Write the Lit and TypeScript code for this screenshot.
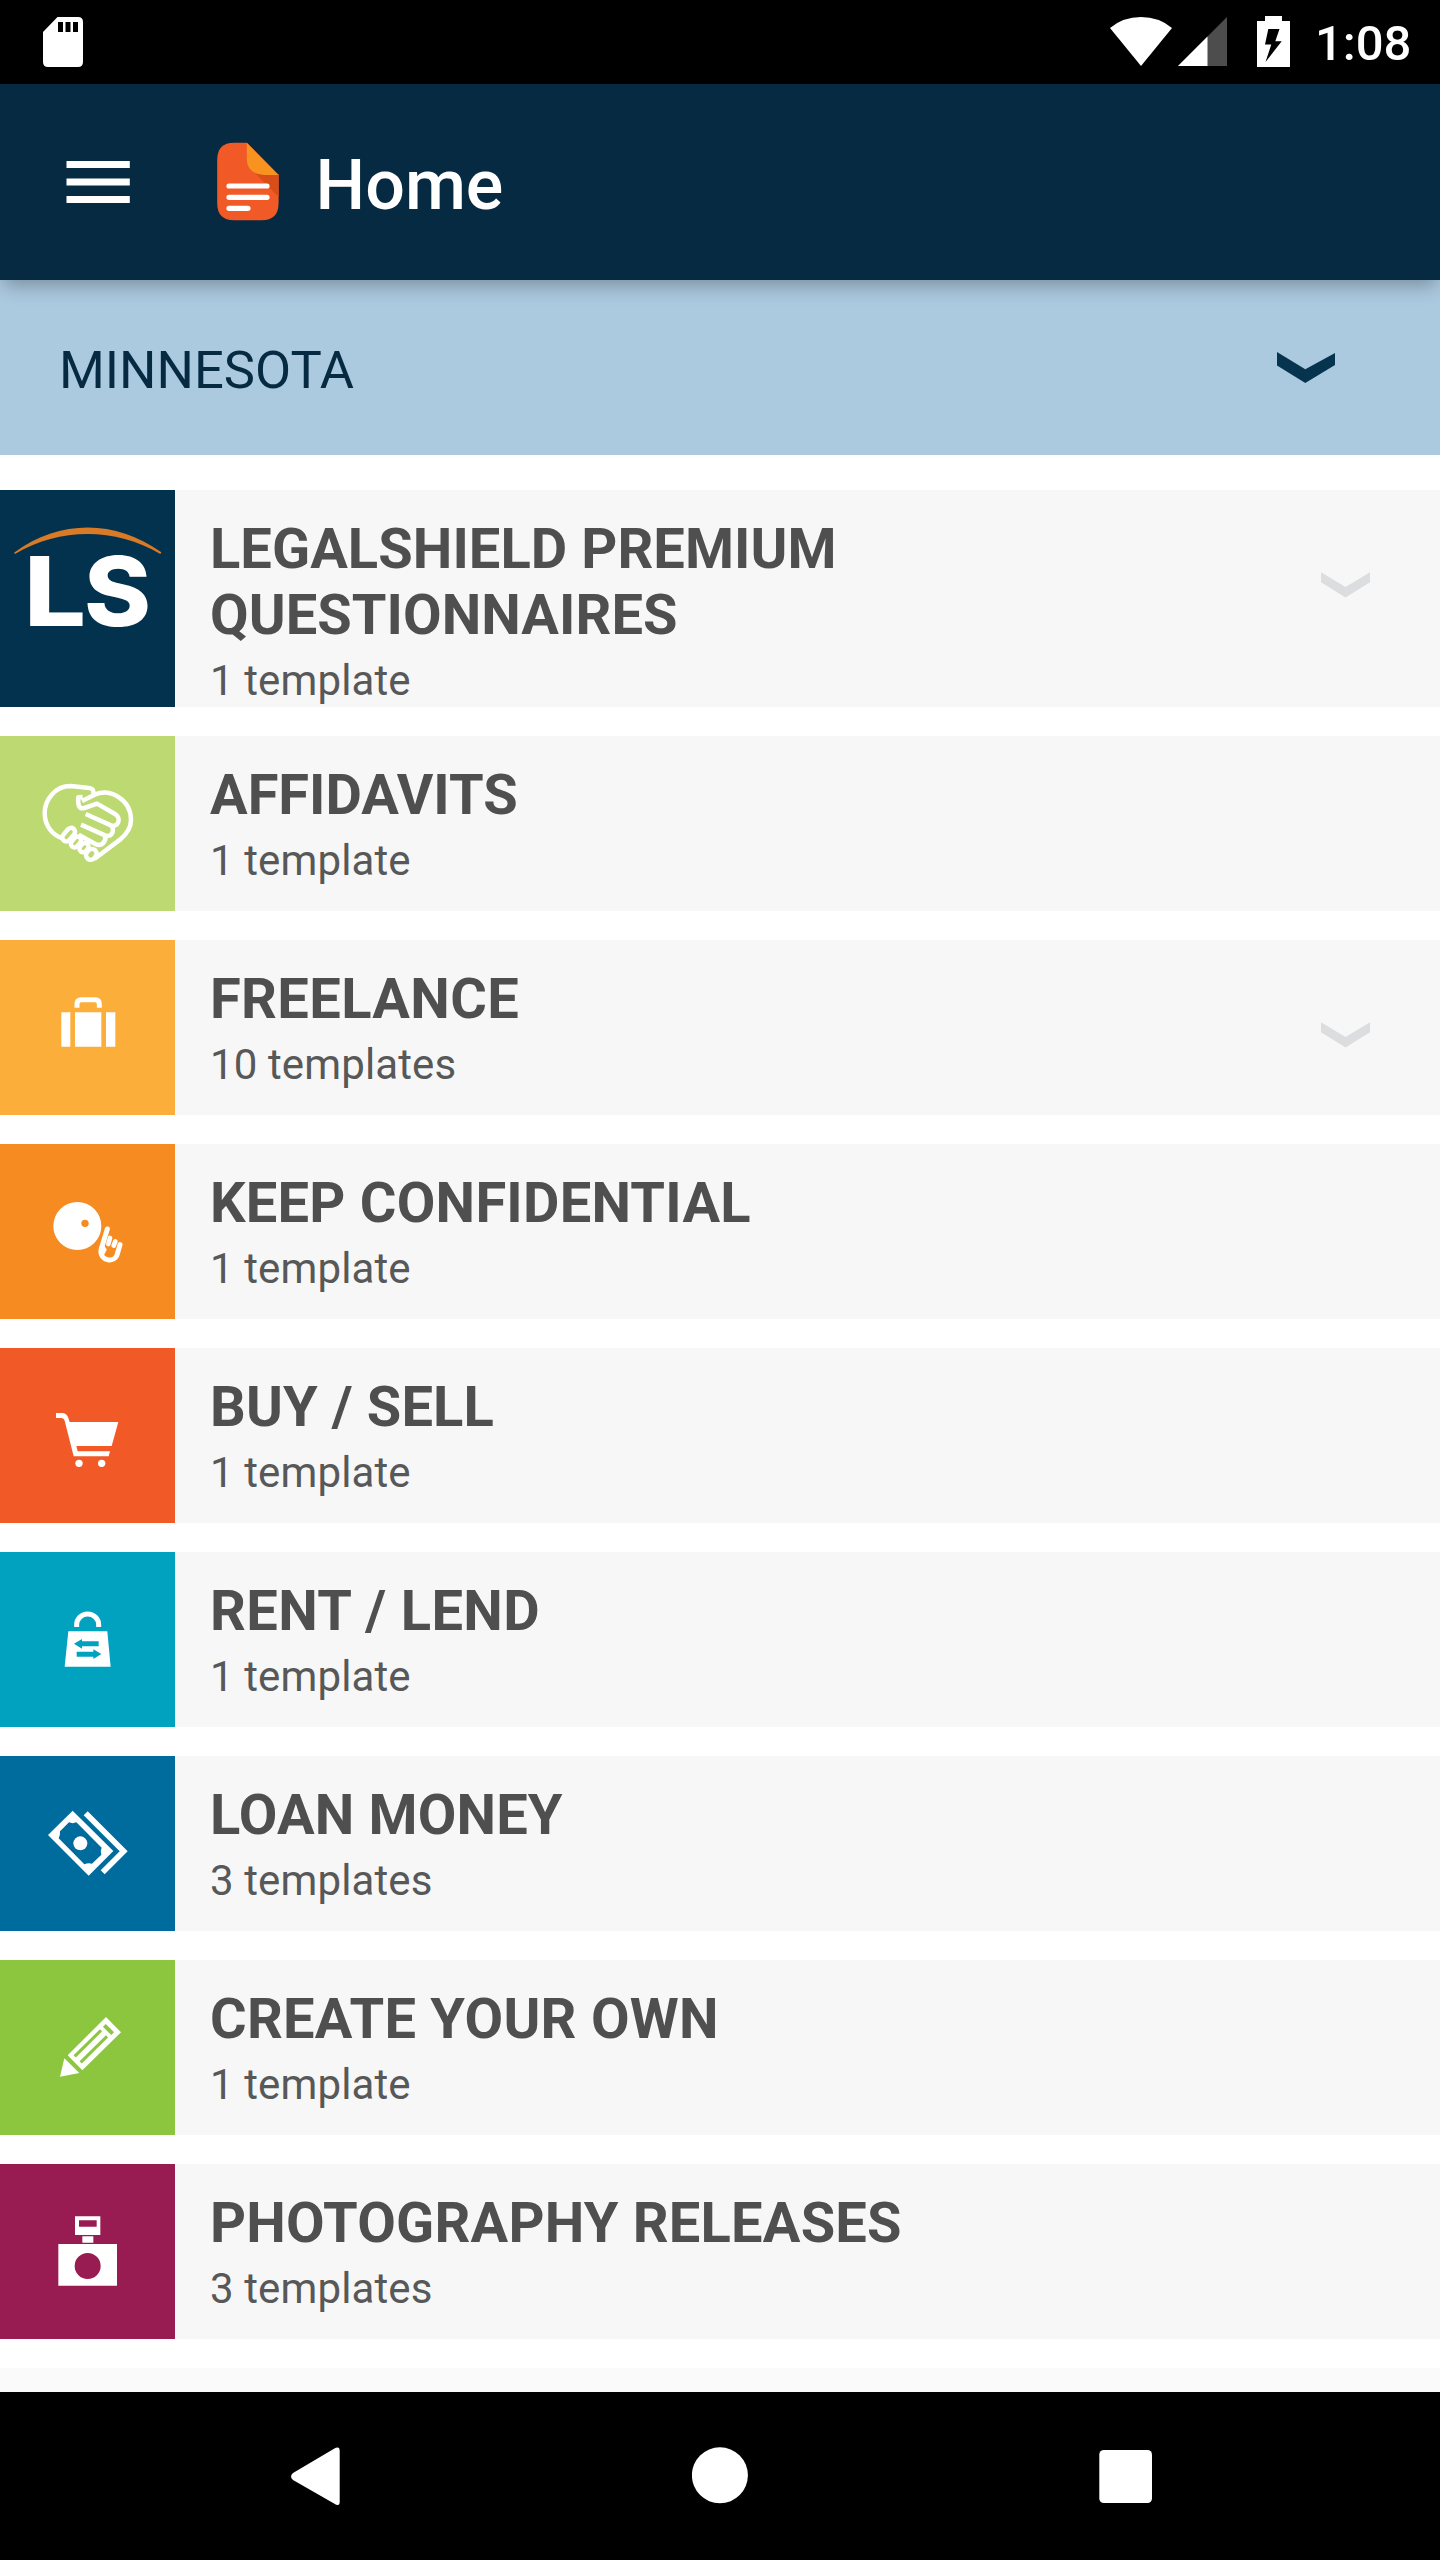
import { LitElement, html, css, svg, nothing, TemplateResult } from "lit";
import { customElement, property } from "lit/decorators.js";

interface Category {
  title: string;
  count: string;
  color: string;
  icon: TemplateResult;
  /** Top of the icon's drawing area, in icon units (3 per pixel). */
  top: number;
  /** Letter spacing of the title, in pixels. */
  tracking: number;
  expandable?: boolean;
  tall?: boolean;
}

const legalShield = svg`
  <path d="M42 818 C180 718 345 718 484 817 L481 822 C345 742 180 742 45 822 Z" fill="#d97a27"/>
  <text class="mark" x="72" y="1038" textLength="186" lengthAdjust="spacingAndGlyphs">L</text>
  <text class="mark" x="252" y="1038" textLength="201" lengthAdjust="spacingAndGlyphs">S</text>`;

const handshake = svg`
  <g fill="none" stroke="#fff" stroke-width="13.5" stroke-linejoin="round">
    <path d="M280 193 C282 177 275 174 262 173 L212 168 C164 168 134 210 134 250 C134 290 160 315 186 324"/>
    <path d="M246 213 L284 194 C330 174 393 208 393 270 C393 296 378 314 360 329 L283 387"/>
    <path d="M248 201 L235 202 C233 222 236 239 253 234 L291 221 L345 252 C366 264 354 294 333 286 L257 252"/>
    <path d="M333 286 C346 301 334 325 315 316 L243 284"/>
    <path d="M315 318 C320 334 304 352 286 342 L236 314"/>
    <rect x="-12" y="-23" width="24" height="46" rx="12" transform="translate(206 314) rotate(40)"/>
    <rect x="-11" y="-18" width="22" height="36" rx="11" transform="translate(228 336) rotate(40)"/>
    <rect x="-11" y="-15" width="22" height="30" rx="11" transform="translate(252 353) rotate(40)"/>
    <rect x="-14" y="-17" width="28" height="34" rx="14" transform="translate(274 373) rotate(40)"/>
  </g>`;

const suitcase = svg`
  <path d="M231 833 V822 Q231 809 244 809 H285 Q298 809 298 822 V833" fill="none" stroke="#fff" stroke-width="15"/>
  <path d="M184 847h27v103h-27zM225 847h79v103h-79zM318 847h28v103h-28z" fill="#fff"/>`;

const secret = svg`
  <path fill-rule="evenodd" fill="#fff" d="M160 288a72 72 0 1 0 144 0a72 72 0 1 0 -144 0ZM244 280a11 11 0 1 1 22 0a11 11 0 1 1 -22 0Z"/>
  <g fill="none" stroke="#fff" stroke-linecap="round" stroke-linejoin="round">
    <path d="M322 297 L303 360 C299 394 345 400 352 372 L360 344" stroke-width="15"/>
    <path d="M330 324 L325 342 M346 334 L341 347" stroke-width="14"/>
    <path d="M305 348 L314 359 L308 370" stroke-width="12"/>
  </g>`;

const cart = svg`
  <path fill="#fff" d="M168 849 H188 Q201 850 205 864 L209 876 H355 L335 948 H229 L233 964 H330 L326 979 H221 L194 872 Q192 864 184 864 H168 Z"/>
  <circle cx="237" cy="1000" r="11" fill="#fff"/><circle cx="305" cy="1000" r="11" fill="#fff"/>`;

const bag = svg`
  <path d="M230 291 V284 A33 32 0 0 1 296 284 V291" fill="none" stroke="#fff" stroke-width="15"/>
  <path fill="#fff" d="M205 304 H322 L332 410 H194 Z"/>
  <path fill="#00a2c0" d="M222 341 L246 327 V334 H296 V349 H246 V356 Z M304 372 L280 387 V380 H230 V365 H280 V358 Z"/>`;

const cash = svg`
  <path fill="#fff" fill-rule="evenodd" d="M218 842 L340 963 L266 1037 L144 915 Z M207 877 L180 904 Q181 918 176 925 L253 1003 Q264 998 276 1001 L304 974 Q300 962 305 953 L229 877 Q218 882 207 877 Z"/>
  <circle cx="241" cy="940" r="21" fill="#fff"/>
  <path d="M257 850 L371 964 L308 1027" fill="none" stroke="#fff" stroke-width="17"/>`;

const pencil = svg`
  <path fill="#fff" d="M318 261 L363 307 L247 421 L203 376 Z M193 385 L238 429 L180 440 Z"/>
  <path fill="none" stroke="#8cc63f" stroke-width="9" d="M224 379 L303 301 M242 397 L321 319"/>
  <path fill="none" stroke="#8cc63f" stroke-width="12" d="M313 286 L338 311"/>`;

const camera = svg`
  <path fill="#fff" fill-rule="evenodd" d="M225 859H301V915H225ZM237 871V890H290V871ZM247 919H280V938H247ZM175 942H351V1067H175ZM224 1008a39 39 0 1 0 78 0a39 39 0 1 0 -78 0Z"/>`;

const categories: Category[] = [
  { title: "LEGALSHIELD PREMIUM QUESTIONNAIRES", count: "1 template", color: "#03324e", icon: legalShield, top: 630, tracking: 0.07, expandable: true, tall: true },
  { title: "AFFIDAVITS", count: "1 template", color: "#bcd972", icon: handshake, top: 18, tracking: 0 },
  { title: "FREELANCE", count: "10 templates", color: "#fbaf3a", icon: suitcase, top: 630, tracking: 0.38, expandable: true },
  { title: "KEEP CONFIDENTIAL", count: "1 template", color: "#f68b21", icon: secret, top: 42, tracking: 0.25 },
  { title: "BUY / SELL", count: "1 template", color: "#f15a27", icon: cart, top: 654, tracking: 0.15 },
  { title: "RENT / LEND", count: "1 template", color: "#00a2c0", icon: bag, top: 66, tracking: 0.4 },
  { title: "LOAN MONEY", count: "3 templates", color: "#006b9d", icon: cash, top: 678, tracking: 0.17 },
  { title: "CREATE YOUR OWN", count: "1 template", color: "#8cc63f", icon: pencil, top: 90, tracking: 0.28 },
  { title: "PHOTOGRAPHY RELEASES", count: "3 templates", color: "#981b52", icon: camera, top: 702, tracking: 0.22 },
];

@customElement("status-bar")
export class StatusBar extends LitElement {
  static styles = css`
    :host { display: flex; align-items: center; justify-content: space-between; height: 84px; padding: 0 30px 0 43px; background: #000; color: #fff; box-sizing: border-box; }
    svg { display: block; }
    .right { display: flex; align-items: center; }
    .time { width: 95px; margin-left: 25px; font-size: 49px; font-weight: 500; line-height: 84px; white-space: nowrap; padding-top: 4px; }
  `;
  render() {
    return html`
      <svg width="40" height="84" viewBox="43 0 40 84">
        <path fill="#fff" fill-rule="evenodd" d="M57.5 17H78q5 0 5 5V62q0 5-5 5H48q-5 0-5-5V32ZM58 22V32h5V22ZM65.5 22V32h5V22ZM73 22V32h5V22Z"/>
      </svg>
      <div class="right">
        <svg width="180" height="84" viewBox="1110 0 180 84">
          <path fill="#fff" d="M1110 28Q1123 17 1141 17T1172 28L1141 66Z"/>
          <path fill="#4d4d4d" d="M1227 17V66H1178Z"/>
          <path fill="#fff" d="M1207.5 36.5V66H1178Z"/>
          <path fill="#fff" d="M1265 16h17v5h8v46h-33V21h8Z"/>
          <path fill="#000" d="M1268.3 29H1279.5L1275.3 41.3H1281.7L1265.5 62L1271.3 44.5H1265Z"/>
        </svg>
        <div class="time">1:08</div>
      </div>`;
  }
}

@customElement("app-header")
export class AppHeader extends LitElement {
  static styles = css`
    :host { display: flex; align-items: center; height: 196px; padding-left: 66px; background: #062a41; color: #fff; position: relative; z-index: 1; box-shadow: 0 9px 18px -4px rgba(0, 0, 0, 0.3); box-sizing: border-box; }
    svg { display: block; }
    .doc { margin-left: 87px; }
    .title { margin-left: 36.5px; padding-top: 5px; font-size: 70px; font-weight: 500; line-height: 82px; }
  `;
  render() {
    return html`
      <svg width="64" height="196" viewBox="66 84 64 196">
        <path fill="#fff" d="M66.5 161h63.3v7H66.5zM66.5 178.6h63.3v7H66.5zM66.5 196h63.3v7H66.5z"/>
      </svg>
      <svg class="doc" width="62" height="196" viewBox="217 84 62 196">
        <path fill="#f15a27" d="M246.8 142.7H234Q217.2 142.7 217.2 160V203Q217.2 220.3 234 220.3H261.5Q278.6 220.3 278.6 203V175Z"/>
        <path fill="#d94e18" d="M256 174L278.6 197V174Z"/>
        <path fill="#f7931e" d="M246.8 142.7L278.6 175H264Q246.8 173.5 246.8 159Z"/>
        <path stroke="#fff" stroke-width="5.2" stroke-linecap="round" d="M229 186H267M229 197.3H267M229 208.3H248"/>
      </svg>
      <div class="title">Home</div>`;
  }
}

@customElement("state-picker")
export class StatePicker extends LitElement {
  static styles = css`
    :host { display: flex; align-items: center; justify-content: space-between; height: 175px; padding: 0 105px 0 59px; background: #abc9df; color: #062a41; box-sizing: border-box; }
    .name { font-size: 52.5px; line-height: 62px; padding-top: 4px; }
    svg { display: block; }
  `;
  render() {
    return html`
      <div class="name">MINNESOTA</div>
      <svg width="58" height="175" viewBox="1277 280 58 175">
        <path fill="#06344f" d="M1277 352L1305.3 369.3L1335 353V365L1305.3 383L1277 365.5Z"/>
      </svg>`;
  }
}

@customElement("category-row")
export class CategoryRow extends LitElement {
  @property({ attribute: false }) item!: Category;

  static styles = css`
    :host { display: block; }
    .row { display: flex; height: 175px; background: #f7f7f7; color: #4f4f4f; }
    .row.tall { height: 217px; }
    .tile { display: block; width: 175px; height: 100%; flex: none; }
    .mark { font-family: Inter, sans-serif; font-weight: 800; font-size: 288px; fill: #fff; }
    .text { flex: 1; padding: 26px 0 0 35px; }
    .title { width: 720px; font-size: 56px; font-weight: 700; line-height: 66px; }
    .count { margin-top: 8px; font-size: 42px; line-height: 49px; letter-spacing: 0.12px; color: #585858; }
    .chevron { display: block; margin: 82px 70px 0 0; flex: none; }
  `;
  render() {
    const { title, count, color, icon, top, tracking, expandable, tall } = this.item;
    return html`
      <div class="row ${tall ? "tall" : ""}">
        <svg class="tile" viewBox="0 ${top} 525 ${tall ? 651 : 525}" style="background:${color}">${icon}</svg>
        <div class="text">
          <div class="title" style="letter-spacing:${tracking}px">${title}</div>
          <div class="count">${count}</div>
        </div>
        ${expandable
          ? html`<svg class="chevron" width="49" height="26" viewBox="0 0 49 26"><path fill="#dcdddf" d="M0 .3L24.5 15L49 .3V10.3L24.5 25.5L0 10.3Z"/></svg>`
          : nothing}
      </div>`;
  }
}

@customElement("nav-bar")
export class NavBar extends LitElement {
  static styles = css`
    :host { display: flex; align-items: center; justify-content: space-between; height: 168px; padding: 0 288px 0 291px; background: #000; box-sizing: border-box; }
    svg { display: block; }
  `;
  render() {
    return html`
      <svg width="49" height="168" viewBox="291 2392 49 168"><path fill="#fff" d="M334 2448.8Q339.7 2445.5 339.7 2451V2502Q339.7 2507 334 2503.4L293 2480Q289 2476.5 293 2473Z"/></svg>
      <svg width="56" height="168" viewBox="692.1 2392 56 168"><circle cx="720" cy="2475.3" r="28" fill="#fff"/></svg>
      <svg width="53" height="168" viewBox="1099 2392 53 168"><rect x="1099.3" y="2450" width="52.7" height="53" rx="4.5" fill="#fff"/></svg>`;
  }
}

@customElement("app-root")
export class AppRoot extends LitElement {
  static styles = css`
    :host { display: flex; flex-direction: column; width: 1440px; height: 2560px; overflow: hidden; background: #fff; font-family: Roboto, "Liberation Sans", sans-serif; }
    status-bar, app-header, state-picker, nav-bar { flex: none; }
    .list { flex: 1; display: flex; flex-direction: column; gap: 29px; padding-top: 35px; min-height: 0; overflow: hidden; box-sizing: border-box; }
    .next { flex: 1; background: #fafafa; }
  `;
  render() {
    return html`
      <status-bar></status-bar>
      <app-header></app-header>
      <state-picker></state-picker>
      <div class="list">
        ${categories.map((item) => html`<category-row .item=${item}></category-row>`)}
        <div class="next"></div>
      </div>
      <nav-bar></nav-bar>`;
  }
}
